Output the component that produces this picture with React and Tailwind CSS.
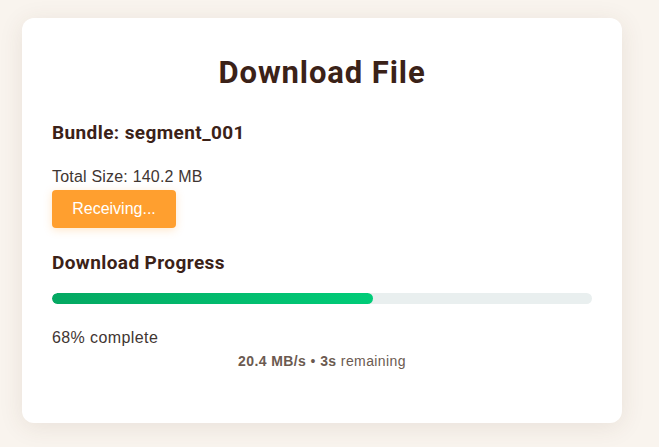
export default function App() {
  const progress = 59.5;

  return (
    <div className="min-h-screen bg-[#f9f4ee] px-[22px] pt-[18px] pb-6 font-['Liberation_Sans',Arial,sans-serif]">
      <div className="w-[600px] rounded-xl bg-white px-[30px] pt-[38px] pb-[53px] shadow-[0_4px_24px_rgba(90,60,40,0.10)]">
        <h1 className="text-center font-['Roboto',sans-serif] text-[31px] font-bold leading-[34px] tracking-[0.9px] text-[#3b2218]">
          Download File
        </h1>

        <h2 className="mt-[31px] font-['Roboto',sans-serif] text-[19px] font-bold leading-6 tracking-[0.4px] text-[#3b2218]">
          Bundle: segment_001
        </h2>

        <p className="mt-[22px] text-[16px] leading-5 tracking-[0.2px] text-[#3f3632]">Total Size: 140.2 MB</p>

        <button className="mt-[3px] h-[38px] w-[124px] rounded-[4px] bg-[#ff9f2f] text-[16px] text-white shadow-[0_2px_8px_rgba(255,159,47,0.25)]">
          Receiving...
        </button>

        <h2 className="mt-[23px] font-['Roboto',sans-serif] text-[19px] font-bold leading-6 tracking-[0.4px] text-[#3b2218]">
          Download Progress
        </h2>

        <div className="mt-[18px] h-[11px] w-full overflow-hidden rounded-full bg-[#e9efef]">
          <div
            className="h-full rounded-full bg-gradient-to-r from-[#04a862] to-[#00cc78]"
            style={{ width: `${progress}%` }}
          />
        </div>

        <p className="mt-[24px] text-[16px] leading-5 tracking-[0.4px] text-[#3f3632]">68% complete</p>

        <p className="mt-[4px] text-center text-[14px] leading-[18px] tracking-[0.4px] text-[#6b5a50]">
          <span className="font-bold">20.4 MB/s</span> • <span className="font-bold">3s</span> remaining
        </p>
      </div>
    </div>
  );
}
